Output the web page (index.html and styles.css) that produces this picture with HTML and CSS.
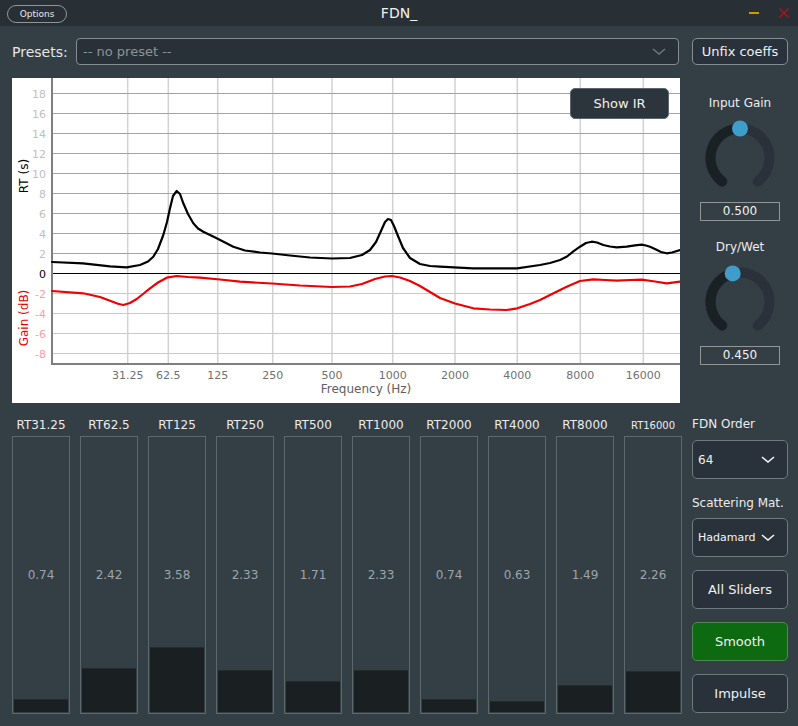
FILE: index.html
```html
<!DOCTYPE html>
<html>
<head>
<meta charset="utf-8">
<title>FDN_</title>
<link rel="stylesheet" href="styles.css">
</head>
<body>
<div class="app">
  <header class="titlebar">
    <button class="options">Options</button>
    <div class="title">FDN_</div>
    <div class="wincontrols">
      <span class="min"></span>
      <svg class="close" width="10" height="10" viewBox="0 0 10 10"><path d="M0.5 0.5 L9.5 9.5 M9.5 0.5 L0.5 9.5" stroke="#b3121f" stroke-width="1.4" fill="none"/></svg>
    </div>
  </header>

  <div class="presets">
    <span class="presets-label">Presets:</span>
    <div class="select preset-select">
      <span class="placeholder">-- no preset --</span>
      <svg class="chev" width="14" height="7" viewBox="0 0 14 7"><polyline points="1,1 7,6 13,1" fill="none" stroke="#6c757a" stroke-width="1.6"/></svg>
    </div>
    <button class="btn unfix">Unfix coeffs</button>
  </div>

  <div class="middle">
    <div class="chart">
      <svg width="668" height="325" viewBox="12 78 668 325">
        <g class="vgrid">
          <line x1="127.7" y1="78" x2="127.7" y2="364"/>
          <line x1="168.3" y1="78" x2="168.3" y2="364"/>
          <line x1="217.7" y1="78" x2="217.7" y2="364"/>
          <line x1="272.7" y1="78" x2="272.7" y2="364"/>
          <line x1="332" y1="78" x2="332" y2="364"/>
          <line x1="392.7" y1="78" x2="392.7" y2="364"/>
          <line x1="455" y1="78" x2="455" y2="364"/>
          <line x1="517.3" y1="78" x2="517.3" y2="364"/>
          <line x1="580.3" y1="78" x2="580.3" y2="364"/>
          <line x1="643.3" y1="78" x2="643.3" y2="364"/>
        </g>
        <g class="hgrid">
          <line x1="53" y1="93.5" x2="680" y2="93.5"/>
          <line x1="53" y1="113.5" x2="680" y2="113.5"/>
          <line x1="53" y1="133.5" x2="680" y2="133.5"/>
          <line x1="53" y1="153.5" x2="680" y2="153.5"/>
          <line x1="53" y1="173.5" x2="680" y2="173.5"/>
          <line x1="53" y1="193.5" x2="680" y2="193.5"/>
          <line x1="53" y1="213.5" x2="680" y2="213.5"/>
          <line x1="53" y1="233.5" x2="680" y2="233.5"/>
          <line x1="53" y1="253.5" x2="680" y2="253.5"/>
        </g>
        <g class="hgrid-neg">
          <line x1="53" y1="293.5" x2="680" y2="293.5"/>
          <line x1="53" y1="313.5" x2="680" y2="313.5"/>
          <line x1="53" y1="333.5" x2="680" y2="333.5"/>
          <line x1="53" y1="353.5" x2="680" y2="353.5"/>
        </g>
        <line class="zero" x1="53" y1="273.5" x2="680" y2="273.5"/>
        <line class="axis" x1="52" y1="78" x2="52" y2="365"/>
        <line class="axis" x1="51" y1="364" x2="680" y2="364"/>

        <g class="ytick">
          <text x="46" y="97.5">18</text>
          <text x="46" y="117.5">16</text>
          <text x="46" y="137.5">14</text>
          <text x="46" y="157.5">12</text>
          <text x="46" y="177.5">10</text>
          <text x="46" y="197.5">8</text>
          <text x="46" y="217.5">6</text>
          <text x="46" y="237.5">4</text>
          <text x="46" y="257.5">2</text>
        </g>
        <text class="ytick-zero" x="46" y="277.5">0</text>
        <g class="ytick-neg">
          <text x="46" y="297.5">-2</text>
          <text x="46" y="317.5">-4</text>
          <text x="46" y="337.5">-6</text>
          <text x="46" y="357.5">-8</text>
        </g>
        <g class="xtick">
          <text x="127.7" y="379">31.25</text>
          <text x="168.3" y="379">62.5</text>
          <text x="217.7" y="379">125</text>
          <text x="272.7" y="379">250</text>
          <text x="332" y="379">500</text>
          <text x="392.7" y="379">1000</text>
          <text x="455" y="379">2000</text>
          <text x="517.3" y="379">4000</text>
          <text x="580.3" y="379">8000</text>
          <text x="643.3" y="379">16000</text>
        </g>
        <text class="xlabel" x="366" y="393">Frequency (Hz)</text>
        <text class="ylabel-rt" x="24" y="180" transform="rotate(-90 24 176)">RT (s)</text>
        <text class="ylabel-gain" x="24" y="322" transform="rotate(-90 24 318)">Gain (dB)</text>

        <polyline class="curve-rt" points="52,262 83,263.3 110,266.3 126.7,267.3 140,265 148,261.5 153.3,256.7 158,249 163.3,235 167,222 170,208.3 173,196 176.7,191 180,194 183.3,203.3 188,214 193.3,223.3 198,228.5 203.3,231.7 210,235 216.7,238.3 225,242.5 233.3,246.7 245,250.5 260,252.5 272,253.5 290,255.5 310,257.5 332,258.5 350,258 362,255 370,250 376,242 381,231 385,222 388,219 391,220 394,226 398,236 403,248 410,258 420,264 430,266 440,266.7 473,268.3 517,268.3 540,265 550,263 560,260 567,256.5 573,251.7 580,246.7 586,243 591.7,241.7 597,242.5 603.3,245 610,246.5 616.7,247.3 626.7,246.7 635,245.3 641.7,244.7 646,245.5 650,246.7 656,249.5 661,252 666.7,253.3 672,252.5 680,250"/>
        <polyline class="curve-gain" points="52,291 83.3,293.3 100,297 110,300.7 118,303.8 123.3,305 130,303 136.7,299 143,294 150,288.3 158,282.5 166.7,277.7 176.7,276 188,277 200,277.7 220,279.5 240,281.7 272,283.5 300,285.5 332,287 350,286.5 362,284 375,279 385,276.5 392,276 400,277.5 410,281 420,286 430,292 440,298 455,303.5 473.3,308.3 490,309.5 506.7,310 517.3,308.3 530,304 540,300 553,293.5 566.7,286.7 580,281 593.3,279.3 605,280 616.7,280.7 630,280 641.7,279.7 655,281.5 666.7,283.3 680,281.7"/>
      </svg>
      <button class="show-ir">Show IR</button>
    </div>

    <div class="knobs">
      <div class="knob-group">
        <div class="knob-label">Input Gain</div>
        <svg class="knob" width="80" height="80" viewBox="0 0 80 80">
          <path class="track" d="M22.25 63.56 A29.5 29.5 0 1 1 57.75 63.56"/>
          <path class="track-val" d="M22.25 63.56 A29.5 29.5 0 0 1 40 10.5"/>
          <circle class="thumb" cx="40" cy="10.5" r="8"/>
        </svg>
        <div class="knob-value">0.500</div>
      </div>
      <div class="knob-group">
        <div class="knob-label">Dry/Wet</div>
        <svg class="knob" width="80" height="80" viewBox="0 0 80 80">
          <path class="track" d="M22.25 63.56 A29.5 29.5 0 1 1 57.75 63.56"/>
          <path class="track-val" d="M22.25 63.56 A29.5 29.5 0 0 1 32.71 11.41"/>
          <circle class="thumb" cx="32.71" cy="11.41" r="8"/>
        </svg>
        <div class="knob-value">0.450</div>
      </div>
    </div>
  </div>

  <div class="bottom">
    <div class="sliders">
      <div class="slider"><div class="slider-label">RT31.25</div><div class="slider-box"><div class="fill" style="height:13px"></div><span class="slider-value">0.74</span></div></div>
      <div class="slider"><div class="slider-label">RT62.5</div><div class="slider-box"><div class="fill" style="height:44px"></div><span class="slider-value">2.42</span></div></div>
      <div class="slider"><div class="slider-label">RT125</div><div class="slider-box"><div class="fill" style="height:65px"></div><span class="slider-value">3.58</span></div></div>
      <div class="slider"><div class="slider-label">RT250</div><div class="slider-box"><div class="fill" style="height:42px"></div><span class="slider-value">2.33</span></div></div>
      <div class="slider"><div class="slider-label">RT500</div><div class="slider-box"><div class="fill" style="height:31px"></div><span class="slider-value">1.71</span></div></div>
      <div class="slider"><div class="slider-label">RT1000</div><div class="slider-box"><div class="fill" style="height:42px"></div><span class="slider-value">2.33</span></div></div>
      <div class="slider"><div class="slider-label">RT2000</div><div class="slider-box"><div class="fill" style="height:13px"></div><span class="slider-value">0.74</span></div></div>
      <div class="slider"><div class="slider-label">RT4000</div><div class="slider-box"><div class="fill" style="height:11px"></div><span class="slider-value">0.63</span></div></div>
      <div class="slider"><div class="slider-label">RT8000</div><div class="slider-box"><div class="fill" style="height:27px"></div><span class="slider-value">1.49</span></div></div>
      <div class="slider"><div class="slider-label small">RT16000</div><div class="slider-box"><div class="fill" style="height:41px"></div><span class="slider-value">2.26</span></div></div>
    </div>

    <div class="controls">
      <div class="ctrl-label first">FDN Order</div>
      <div class="dropdown">
        <span>64</span>
        <svg width="14" height="7" viewBox="0 0 14 7"><polyline points="1,1 7,6 13,1" fill="none" stroke="#f2f2f2" stroke-width="1.6"/></svg>
      </div>
      <div class="ctrl-label second">Scattering Mat.</div>
      <div class="dropdown">
        <span class="small">Hadamard</span>
        <svg width="14" height="7" viewBox="0 0 14 7"><polyline points="1,1 7,6 13,1" fill="none" stroke="#f2f2f2" stroke-width="1.6"/></svg>
      </div>
      <button class="btn ctrl-btn">All Sliders</button>
      <button class="btn ctrl-btn smooth">Smooth</button>
      <button class="btn ctrl-btn">Impulse</button>
    </div>
  </div>
</div>
</body>
</html>
```

FILE: styles.css
```css
* { box-sizing: border-box; }

body {
  margin: 0;
  width: 798px;
  height: 726px;
  overflow: hidden;
  background: #343e45;
  font-family: "DejaVu Sans", Verdana, sans-serif;
  color: #ececec;
}

.app {
  width: 798px;
  height: 726px;
}

/* title bar */
.titlebar {
  height: 26px;
  background: #283036;
  display: grid;
  grid-template-columns: 1fr auto 1fr;
  align-items: center;
}

.options {
  justify-self: start;
  margin-left: 7px;
  margin-top: 1px;
  width: 60px;
  height: 18px;
  padding: 0;
  border: 1px solid #8e979c;
  border-radius: 9px;
  background: transparent;
  color: #e8e8e8;
  font-family: "DejaVu Sans", Verdana, sans-serif;
  font-size: 9px;
}

.title {
  font-size: 14px;
  color: #f2f2f2;
}

.wincontrols {
  justify-self: end;
  display: flex;
  align-items: center;
  gap: 20px;
  margin-right: 9px;
}

.min {
  display: block;
  width: 10px;
  height: 2px;
  background: #c99c00;
}

.close {
  display: block;
}

/* presets row */
.presets {
  display: flex;
  align-items: center;
  height: 27px;
  margin: 12px 10px 0 12px;
}

.presets-label {
  width: 57px;
  margin-right: 7px;
  font-size: 14px;
  color: #e6e6e6;
  white-space: nowrap;
}

.select {
  flex: 1;
  height: 27px;
  display: flex;
  align-items: center;
  justify-content: space-between;
  padding: 0 12px 0 6px;
  background: #283137;
  border: 1px solid #858d92;
  border-radius: 4px;
}

.placeholder {
  font-size: 13px;
  color: #8d9498;
}

.chev {
  display: block;
}

.btn {
  padding: 0;
  background: #29323a;
  border: 1px solid #7c868b;
  border-radius: 5px;
  color: #f0f0f0;
  font-family: "DejaVu Sans", Verdana, sans-serif;
  font-size: 13px;
}

.unfix {
  margin-left: 13px;
  width: 96px;
  height: 27px;
  border-color: #858e93;
}

/* middle */
.middle {
  display: flex;
  margin-top: 13px;
}

.chart {
  position: relative;
  width: 668px;
  height: 325px;
  margin-left: 12px;
  background: #ffffff;
}

.chart svg {
  display: block;
}

.vgrid line {
  stroke: #d2d2d2;
  stroke-width: 1.5;
}

.hgrid line {
  stroke: #a3a3a3;
  stroke-width: 1;
}

.hgrid-neg line {
  stroke: #ffb3b3;
  stroke-width: 1;
}

.zero {
  stroke: #000000;
  stroke-width: 1;
}

.axis {
  stroke: #7f7f7f;
  stroke-width: 2;
}

.ytick text,
.ytick-zero,
.ytick-neg text {
  font-family: "DejaVu Sans", Verdana, sans-serif;
  font-size: 11px;
  text-anchor: end;
}

.ytick text { fill: #c0c0c0; }
.ytick-zero { fill: #000000; }
.ytick-neg text { fill: #ff9d9d; }

.xtick text {
  font-family: "DejaVu Sans", Verdana, sans-serif;
  font-size: 11px;
  fill: #707070;
  text-anchor: middle;
}

.xlabel {
  font-family: "DejaVu Sans", Verdana, sans-serif;
  font-size: 12px;
  fill: #606060;
  text-anchor: middle;
}

.ylabel-rt,
.ylabel-gain {
  font-family: "DejaVu Sans", Verdana, sans-serif;
  font-size: 12px;
  text-anchor: middle;
}

.ylabel-rt { fill: #000000; }
.ylabel-gain { fill: #e60000; }

.curve-rt,
.curve-gain {
  fill: none;
  stroke-width: 2.2;
  stroke-linejoin: round;
  stroke-linecap: round;
}

.curve-rt { stroke: #000000; }
.curve-gain { stroke: #f00000; }

.show-ir {
  position: absolute;
  top: 10px;
  right: 11px;
  width: 99px;
  height: 31px;
  padding: 0;
  background: #2b353b;
  border: 1px solid #5c676d;
  border-radius: 5px;
  color: #f0f0f0;
  font-family: "DejaVu Sans", Verdana, sans-serif;
  font-size: 13px;
}

/* knobs */
.knobs {
  width: 118px;
  padding-left: 2px;
  display: flex;
  flex-direction: column;
  align-items: center;
}

.knob-group {
  display: flex;
  flex-direction: column;
  align-items: center;
}

.knob-label {
  margin-top: 17px;
  font-size: 12px;
  line-height: 16px;
  color: #ececec;
}

.knob-group + .knob-group .knob-label {
  margin-top: 18px;
}

.knob {
  display: block;
  margin-top: 7px;
}

.track {
  fill: none;
  stroke: #29323a;
  stroke-width: 10;
  stroke-linecap: round;
}

.track-val {
  fill: none;
  stroke: #1a2125;
  stroke-width: 10;
  stroke-linecap: round;
}

.thumb {
  fill: #3e9dcb;
}

.knob-value {
  margin-top: 4px;
  width: 80px;
  height: 19px;
  border: 1px solid #8f979b;
  text-align: center;
  font-size: 12px;
  line-height: 17px;
  color: #f2f2f2;
}

/* bottom */
.bottom {
  display: flex;
  gap: 10px;
  margin-left: 12px;
}

.sliders {
  display: flex;
  gap: 10px;
}

.slider {
  width: 58px;
  display: flex;
  flex-direction: column;
}

.slider-label {
  height: 33px;
  padding-bottom: 3px;
  display: flex;
  align-items: flex-end;
  justify-content: center;
  font-size: 12px;
  line-height: 16px;
  color: #ececec;
  white-space: nowrap;
}

.slider-label.small {
  font-size: 10px;
  padding-bottom: 2px;
}

.slider-box {
  height: 278px;
  padding: 1px;
  border: 1px solid #5d686e;
  display: grid;
}

.fill {
  grid-area: 1 / 1;
  align-self: end;
  background: #1a1f22;
  border-top: 1px solid #232b2f;
}

.slider-value {
  grid-area: 1 / 1;
  align-self: center;
  justify-self: center;
  font-size: 12px;
  color: #9da5a9;
}

/* right controls */
.controls {
  width: 96px;
  display: flex;
  flex-direction: column;
}

.ctrl-label {
  font-size: 12px;
  line-height: 16px;
  color: #ececec;
  white-space: nowrap;
}

.ctrl-label.first {
  margin-top: 13px;
  margin-bottom: 8px;
}

.ctrl-label.second {
  margin-top: 16px;
  margin-bottom: 7px;
}

.dropdown {
  height: 39px;
  display: flex;
  align-items: center;
  justify-content: space-between;
  padding: 0 12px 0 5px;
  background: #29323a;
  border: 1px solid #6f7a80;
  border-radius: 5px;
  font-size: 12px;
  color: #f2f2f2;
}

.dropdown .small {
  font-size: 11px;
}

.dropdown svg {
  display: block;
}

.ctrl-btn {
  margin-top: 13px;
  height: 39px;
  border-color: #6f7a80;
}

.smooth {
  background: #0d6a10;
  border-color: #4f8a50;
}
```
